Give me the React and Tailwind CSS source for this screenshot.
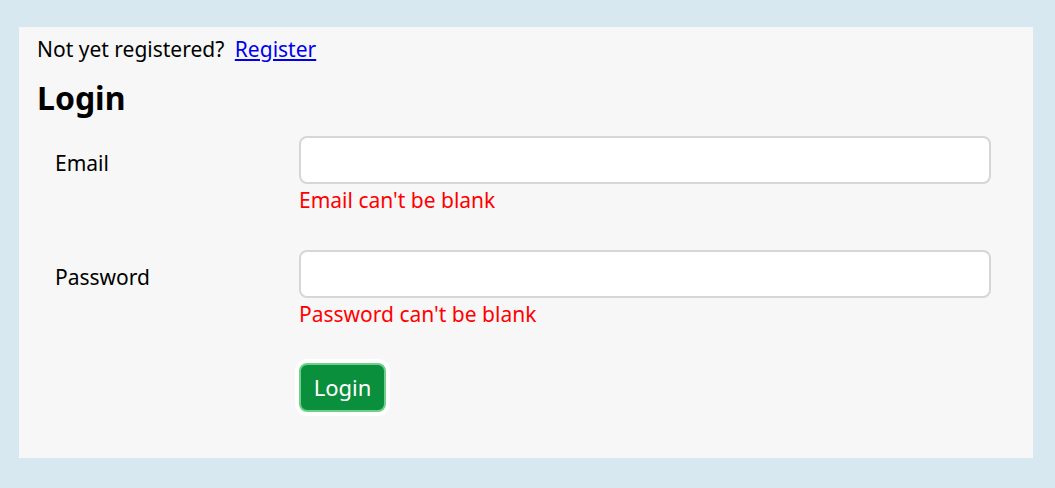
export default function App() {
  const font = { fontFamily: '"Noto Sans", "Open Sans", sans-serif' }
  return (
    <div className="min-h-[488px] bg-[#d8e8f0] pt-[27px] pl-[19px] pr-[22px] pb-[30px]" style={font}>
      <div className="bg-[#f7f7f7] h-[431px] pl-[18px] pr-[42px] pt-[14px] text-[21px] text-black">
        <p className="leading-none -mt-[2px]">
          Not yet registered?{' '}
          <a href="#" className="ml-[5px] text-[#0000ee] underline">Register</a>
        </p>
        <h1 className="mt-[22px] text-[32px] font-bold leading-none">Login</h1>
        <form className="mt-[22px] grid grid-cols-[262px_1fr]">
          <label className="pl-[18px] pt-[17px] leading-none">Email</label>
          <div>
            <input type="text" className="block w-full h-[48px] bg-white border-2 border-[#d6d6d6] rounded-[8px]" />
            <p className="mt-[6px] text-[#ff0000] leading-none">Email can't be blank</p>
          </div>
          <label className="pl-[18px] pt-[56px] leading-none">Password</label>
          <div className="pt-[39px]">
            <input type="password" className="block w-full h-[48px] bg-white border-2 border-[#d6d6d6] rounded-[8px]" />
            <p className="mt-[6px] text-[#ff0000] leading-none">Password can't be blank</p>
          </div>
          <div />
          <div className="pt-[38px]">
            <button type="button" className="w-[87px] h-[49px] rounded-[8px] bg-[#0a8f3c] border-2 border-[#6fd08c] ring-4 ring-white text-white text-[22px]">
              Login
            </button>
          </div>
        </form>
      </div>
    </div>
  )
}
